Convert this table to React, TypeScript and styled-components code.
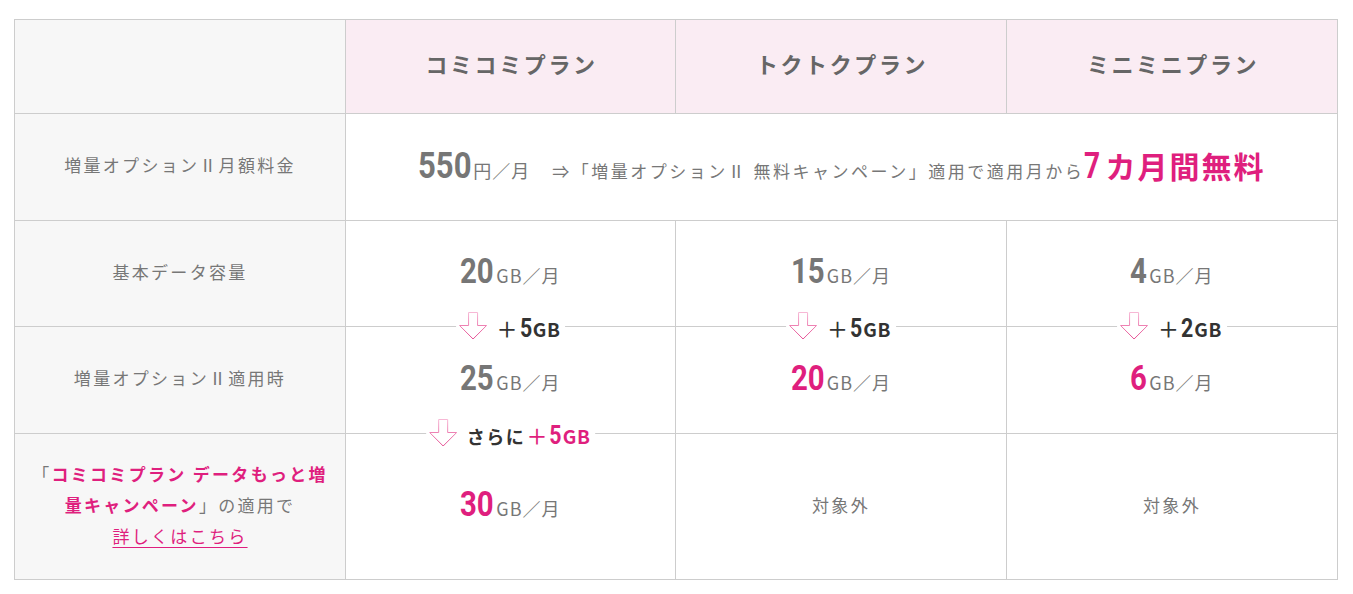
import React from 'react';
import styled, { createGlobalStyle, css } from 'styled-components';

const GlobalStyle = createGlobalStyle`
  * {
    box-sizing: border-box;
  }
  body {
    margin: 0;
    background: #fff;
    font-family: "Noto Sans CJK JP", "Noto Sans", sans-serif;
    color: #777;
  }
`;

const PINK = '#df1f7e';
const LINE = '#cdcdcd';

// digits in the reference are a condensed face; squeeze Roboto to match
const condensed = (size: number, digits: number, scale = 0.84) => css`
  display: inline-block;
  font-family: Roboto, "Liberation Sans", sans-serif;
  font-size: ${size}px;
  transform: scaleX(${scale});
  transform-origin: left bottom;
  margin-right: ${-(1 - scale) * 0.5615 * size * digits}px;
`;

const Page = styled.div`
  padding: 19px 16px 14px 14px;
`;

const Table = styled.div`
  display: grid;
  grid-template-columns: 331px 330px 331px 331px;
  grid-template-rows: 94px 107px 106px 107px 146px;
  width: 1324px;
  border-top: 1px solid ${LINE};
  border-left: 1px solid ${LINE};
`;

const Cell = styled.div<{ $span?: number }>`
  position: relative;
  display: flex;
  align-items: center;
  justify-content: center;
  text-align: center;
  padding-bottom: 4px;
  border-right: 1px solid ${LINE};
  border-bottom: 1px solid ${LINE};
  background: #fff;
  grid-column: span ${(p) => p.$span ?? 1};
`;

const HeadCell = styled(Cell)`
  background: #faecf3;
  padding-bottom: 8px;
`;

const LabelCell = styled(Cell)`
  background: #f7f7f7;
  padding: 0 16px 5px;
`;

const PlanName = styled.span`
  font-size: 22px;
  font-weight: 700;
  color: #666;
  letter-spacing: 2.6px;
  padding-left: 2px;
`;

const Label = styled.div`
  font-size: 17px;
  line-height: 31px;
  letter-spacing: 2.3px;
  color: #777;
`;

const Strong = styled.strong`
  color: ${PINK};
  font-weight: 700;
`;

const DetailLink = styled.a`
  color: ${PINK};
  text-decoration: underline;
  text-underline-offset: 4px;
  text-decoration-thickness: 1px;
`;

const Amount = styled.div`
  display: flex;
  align-items: baseline;
  white-space: nowrap;
`;

const Num = styled.span<{ $pink?: boolean; $size: number; $digits: number }>`
  ${(p) => condensed(p.$size, p.$digits)}
  font-weight: 700;
  color: ${(p) => (p.$pink ? PINK : '#767676')};
  padding-right: 2px;
`;

const Unit = styled.span`
  font-size: 18px;
  letter-spacing: 1px;
  color: #777;
`;

const Note = styled.span`
  font-size: 17px;
  letter-spacing: 2.5px;
  color: #777;
  margin-left: 22px;
`;

const Free = styled.span`
  font-size: 30px;
  font-weight: 700;
  letter-spacing: 2px;
  color: ${PINK};
`;

const FreeNum = styled.span`
  ${condensed(36, 1, 0.78)}
  padding-right: 3px;
`;

const Step = styled.div`
  position: absolute;
  left: 50%;
  bottom: -14px;
  transform: translateX(-50%);
  z-index: 2;
  display: flex;
  align-items: center;
  gap: 10px;
  height: 28px;
  padding: 0 5px 0 3px;
  background: #fff;
  white-space: nowrap;
`;

const StepText = styled.span<{ $pink?: boolean }>`
  display: flex;
  align-items: baseline;
  font-weight: 700;
  color: ${(p) => (p.$pink ? PINK : '#333')};
  line-height: 1;
  margin-top: 3px;
`;

const Plus = styled.span`
  font-size: 21px;
  font-weight: 500;
  margin-right: 2px;
`;

const StepNum = styled.span`
  ${condensed(26, 1, 0.82)}
  padding-right: 1px;
`;

const StepUnit = styled.span`
  font-size: 19px;
  letter-spacing: 0.5px;
`;

const Lead = styled.span`
  font-size: 18px;
  letter-spacing: 1.6px;
  color: #333;
  margin-right: 1px;
`;

const ArrowIcon = () => (
  <svg width="28" height="28" viewBox="0 0 28 28">
    <defs>
      <linearGradient id="stepArrow" x1="0" y1="0" x2="0" y2="1">
        <stop offset="0" stopColor="#f7b8d5" />
        <stop offset="1" stopColor="#e44a90" />
      </linearGradient>
    </defs>
    <polygon
      points="9.5,0.5 18.5,0.5 18.5,13.5 27.5,13.5 14,27 0.5,13.5 9.5,13.5"
      fill="#fff"
      stroke="url(#stepArrow)"
      strokeWidth="1"
    />
  </svg>
);

const Gb = ({ n, pink }: { n: string; pink?: boolean }) => (
  <Amount>
    <Num $pink={pink} $size={35} $digits={n.length}>
      {n}
    </Num>
    <Unit>GB／月</Unit>
  </Amount>
);

const PlusStep = ({ n, lead }: { n: string; lead?: boolean }) => (
  <Step>
    <ArrowIcon />
    <StepText $pink={lead}>
      {lead && <Lead>さらに</Lead>}
      <Plus>＋</Plus>
      <StepNum>{n}</StepNum>
      <StepUnit>GB</StepUnit>
    </StepText>
  </Step>
);

export default function App() {
  return (
    <Page>
      <GlobalStyle />
      <Table>
        <LabelCell />
        <HeadCell>
          <PlanName>コミコミプラン</PlanName>
        </HeadCell>
        <HeadCell>
          <PlanName>トクトクプラン</PlanName>
        </HeadCell>
        <HeadCell>
          <PlanName>ミニミニプラン</PlanName>
        </HeadCell>

        <LabelCell>
          <Label>増量オプションⅡ月額料金</Label>
        </LabelCell>
        <Cell $span={3}>
          <Amount>
            <Num $size={37} $digits={3}>
              550
            </Num>
            <Unit>円／月</Unit>
            <Note>⇒「増量オプションⅡ 無料キャンペーン」適用で適用月から</Note>
            <Free>
              <FreeNum>7</FreeNum>カ月間無料
            </Free>
          </Amount>
        </Cell>

        <LabelCell>
          <Label>基本データ容量</Label>
        </LabelCell>
        <Cell>
          <Gb n="20" />
          <PlusStep n="5" />
        </Cell>
        <Cell>
          <Gb n="15" />
          <PlusStep n="5" />
        </Cell>
        <Cell>
          <Gb n="4" />
          <PlusStep n="2" />
        </Cell>

        <LabelCell>
          <Label>増量オプションⅡ適用時</Label>
        </LabelCell>
        <Cell>
          <Gb n="25" />
          <PlusStep n="5" lead />
        </Cell>
        <Cell>
          <Gb n="20" pink />
        </Cell>
        <Cell>
          <Gb n="6" pink />
        </Cell>

        <LabelCell>
          <Label>
            「<Strong>コミコミプラン データもっと増量キャンペーン</Strong>」の適用で
            <br />
            <DetailLink href="#">詳しくはこちら</DetailLink>
          </Label>
        </LabelCell>
        <Cell>
          <Gb n="30" pink />
        </Cell>
        <Cell>
          <Label>対象外</Label>
        </Cell>
        <Cell>
          <Label>対象外</Label>
        </Cell>
      </Table>
    </Page>
  );
}
